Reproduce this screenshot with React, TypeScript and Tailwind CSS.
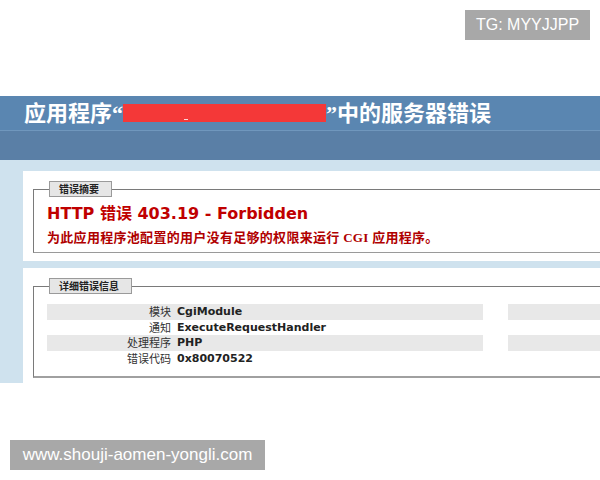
import React from "react";

const CJK = '"Noto Sans CJK SC", sans-serif';

const details = [
  { label: "模块", value: "CgiModule" },
  { label: "通知", value: "ExecuteRequestHandler" },
  { label: "处理程序", value: "PHP" },
  { label: "错误代码", value: "0x80070522" },
];

function Legend({ children, width }: { children: React.ReactNode; width: string }) {
  return (
    <legend
      className={`ml-[2px] h-[16px] ${width} border border-[#9a9a9a] bg-[#e6e6e6] pl-[9px] text-[10px] leading-[14px] font-bold text-[#222]`}
      style={{ fontFamily: CJK }}
    >
      {children}
    </legend>
  );
}

export default function App() {
  return (
    <div className="relative h-[480px] w-[600px] overflow-hidden bg-white">
      <div className="h-[96px]" />

      {/* header */}
      <div className="flex h-[34px] items-center bg-[#5a86b1] pl-[24px] text-[22px] font-bold text-white"
        style={{ fontFamily: '"Liberation Serif", "Noto Sans CJK SC", serif' }}>
        <span>应用程序“</span>
        <span className="relative inline-block h-[18px] w-[203px] bg-[#f43838]">
          <span className="absolute left-[61px] top-[15px] h-[1px] w-[4px] bg-white/80" />
        </span>
        <span>”中的服务器错误</span>
      </div>
      <div className="h-[30px] border-t border-[#7097bd] bg-[#5a7fa6]" />

      {/* content */}
      <div className="flex h-[223px] flex-col gap-[7px] bg-[#cfe2ee] pl-[23px] pt-[11px]">
        <div className="h-[90px] overflow-hidden bg-white pl-[10px] pt-[10px]">
          <fieldset className="h-[72px] border border-r-0 border-t-[#7a7a7a] border-l-[#7a7a7a] border-b-[#9a9a9a] pl-[13px]">
            <Legend width="w-[63px]">错误摘要</Legend>
            <div
              className="mt-[7px] text-[16px] leading-[20px] font-bold text-[#c00000]"
              style={{ fontFamily: '"DejaVu Sans", "Noto Sans CJK SC", sans-serif' }}
            >
              HTTP 错误 403.19 - Forbidden
            </div>
            <div
              className="mt-[6px] text-[13px] leading-[16px] font-bold tracking-[0.3px] text-[#b00000]"
              style={{ fontFamily: '"Liberation Serif", "Noto Sans CJK SC", serif' }}
            >
              为此应用程序池配置的用户没有足够的权限来运行 CGI 应用程序。
            </div>
          </fieldset>
        </div>

        <div className="flex-1 overflow-hidden bg-white pl-[10px] pt-[10px]">
          <fieldset className="h-[100px] border border-r-0 border-t-[#7a7a7a] border-l-[#7a7a7a] border-b-[2px] border-b-[#a0a0a0] pl-[13px]">
            <Legend width="w-[83px]">详细错误信息</Legend>
            <div className="mt-[10px] flex gap-[25px]">
              <div className="w-[436px] text-[11px] leading-[15.5px]">
                {details.map((d, i) => (
                  <div key={d.label} className={`flex h-[15.5px] ${i % 2 === 0 ? "bg-[#e8e8e8]" : ""}`}>
                    <span className="w-[125px] pr-[1px] text-right text-[#333]" style={{ fontFamily: CJK }}>
                      {d.label}
                    </span>
                    <span
                      className="pl-[5px] font-bold text-[#222]"
                      style={{ fontFamily: '"DejaVu Sans", sans-serif' }}
                    >
                      {d.value}
                    </span>
                  </div>
                ))}
              </div>
              <div className="flex-1">
                {details.map((d, i) => (
                  <div key={d.label} className={`h-[15.5px] ${i % 2 === 0 ? "bg-[#e8e8e8]" : ""}`} />
                ))}
              </div>
            </div>
          </fieldset>
        </div>
      </div>

      {/* watermarks */}
      <div
        className="absolute left-[465px] top-[10px] flex h-[30px] w-[125px] items-center justify-center bg-[#a8a8a8] text-[16px] text-white"
        style={{ fontFamily: '"Liberation Sans", sans-serif' }}
      >
        TG: MYYJJPP
      </div>
      <div
        className="absolute left-[10px] top-[440px] flex h-[30px] w-[255px] items-center justify-center bg-[#a8a8a8] text-[17px] text-white"
        style={{ fontFamily: '"Liberation Sans", sans-serif' }}
      >
        www.shouji-aomen-yongli.com
      </div>
    </div>
  );
}
